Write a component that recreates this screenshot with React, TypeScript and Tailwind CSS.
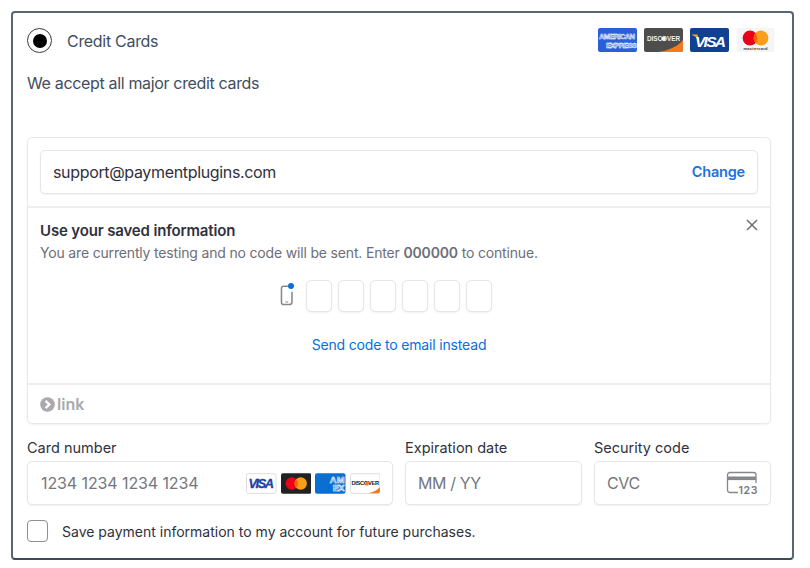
import React from "react";

const F = "Inter, 'Liberation Sans', sans-serif";

function Amex({ w = 39, h = 24 }: { w?: number; h?: number }) {
  return (
    <svg width={w} height={h} viewBox="0 0 39 24" className="block">
      <rect width="39" height="24" rx="2" fill="#2a5fd8" />
      <text x="1" y="11" fontSize="7.6" fontWeight="700" fill="#2a5fd8" stroke="#fff" strokeWidth="0.5" fontFamily="Liberation Sans, sans-serif" textLength="36">AMERICAN</text>
      <text x="8" y="20" fontSize="7.6" fontWeight="700" fill="#2a5fd8" stroke="#fff" strokeWidth="0.5" fontFamily="Liberation Sans, sans-serif" textLength="31">EXPRESS</text>
    </svg>
  );
}
function Discover() {
  return (
    <svg width="39" height="24" viewBox="0 0 39 24" className="block">
      <rect width="39" height="24" rx="2" fill="#4d4d4d" />
      <path d="M14 24 C26 22 34 18 39 12 V22 a2 2 0 0 1 -2 2 Z" fill="#f47a1c" />
      <text x="3" y="12.8" fontSize="6.4" fontWeight="700" fill="#eee" fontFamily="Liberation Sans, sans-serif" textLength="33">DISCOVER</text>
      <circle cx="19.6" cy="10.6" r="2.2" fill="#f5f5f5" />
    </svg>
  );
}
function Visa() {
  return (
    <svg width="39" height="24" viewBox="0 0 39 24" className="block">
      <rect width="39" height="24" rx="2" fill="#10408f" />
      <path d="M2 6.5 h5.5 l2 7 C7.5 10 5 8 2 7Z" fill="#f4a51c" />
      <text x="5" y="18.5" fontSize="15.5" fontWeight="700" fontStyle="italic" fill="#fff" fontFamily="Liberation Sans, sans-serif" textLength="31">VISA</text>
    </svg>
  );
}
function Master() {
  return (
    <svg width="39" height="24" viewBox="0 0 38 24" className="block">
      <rect width="38" height="24" rx="2" fill="#f5f5f5" />
      <circle cx="13.5" cy="10" r="7.4" fill="#eb001b" />
      <circle cx="24.5" cy="10" r="7.4" fill="#f79e1b" />
      <path d="M19 5 a7.4 7.4 0 0 1 0 10 a7.4 7.4 0 0 1 0 -10Z" fill="#ff5f00" />
      <text x="7" y="21.8" fontSize="4" fontWeight="700" fill="#333" fontFamily="Liberation Sans, sans-serif" textLength="24">mastercard</text>
    </svg>
  );
}
function SmVisa() {
  return (
    <svg width="30.5" height="21" viewBox="0 0 31 21" className="block">
      <rect x=".5" y=".5" width="30" height="20" rx="2" fill="#fff" stroke="#dcdcdc" />
      <text x="2.5" y="15.5" fontSize="13" fontWeight="700" fontStyle="italic" fill="#1a3fa8" stroke="#1a3fa8" strokeWidth="0.3" fontFamily="Liberation Sans, sans-serif" textLength="26">VISA</text>
    </svg>
  );
}
function SmMaster() {
  return (
    <svg width="30.5" height="21" viewBox="0 0 31 21" className="block">
      <rect width="31" height="21" rx="2" fill="#222" />
      <circle cx="11" cy="10.5" r="6.3" fill="#eb001b" />
      <circle cx="20" cy="10.5" r="6.3" fill="#f79e1b" />
      <path d="M15.5 6.1 a6.3 6.3 0 0 1 0 8.8 a6.3 6.3 0 0 1 0 -8.8Z" fill="#ff5f00" />
    </svg>
  );
}
function SmAmex() {
  return (
    <svg width="30.5" height="21" viewBox="0 0 31 21" className="block">
      <rect width="31" height="21" rx="2" fill="#0a6fd1" />
      <text x="15" y="10" fontSize="9.5" fontWeight="700" fill="#0a6fd1" stroke="#fff" strokeWidth="0.6" fontFamily="Liberation Sans, sans-serif" textLength="15">AM</text>
      <text x="18" y="18.5" fontSize="9.5" fontWeight="700" fill="#0a6fd1" stroke="#fff" strokeWidth="0.6" fontFamily="Liberation Sans, sans-serif" textLength="12">EX</text>
    </svg>
  );
}
function SmDiscover() {
  return (
    <svg width="30.5" height="21" viewBox="0 0 31 21" className="block">
      <rect x=".5" y=".5" width="30" height="20" rx="2" fill="#fff" stroke="#dcdcdc" />
      <path d="M19 20.5 C24 19 28 17 30.5 14 V18.5 a2 2 0 0 1 -2 2 Z" fill="#f47a1c" />
      <text x="1.5" y="12.5" fontSize="5.8" fontWeight="700" fill="#222" fontFamily="Liberation Sans, sans-serif" textLength="28">DISCOVER</text>
      <circle cx="17.3" cy="10.7" r="2" fill="#f47a1c" />
    </svg>
  );
}

function LinkLogo() {
  return (
    <div className="flex items-center gap-[1px] text-[#a8aaad]">
      <svg width="15" height="15" viewBox="0 0 15 15" className="block">
        <circle cx="7.5" cy="7.5" r="7.3" fill="#a8aaad" />
        <path d="M5.6 3.8 L9.3 7.5 L5.6 11.2" fill="none" stroke="#fff" strokeWidth="2.4" />
      </svg>
      <span className="text-[16px] font-semibold leading-none ml-[1px]">link</span>
    </div>
  );
}

function Phone() {
  return (
    <div className="relative w-[14px] h-[24px]">
      <svg width="14" height="21" viewBox="0 0 14 22" className="absolute left-0 top-[3px] block">
        <path d="M8 1.2 H3.5 a2.3 2.3 0 0 0 -2.3 2.3 v14.5 a2.5 2.5 0 0 0 2.5 2.5 h6 a2.5 2.5 0 0 0 2.5 -2.5 V7" fill="none" stroke="#85878c" strokeWidth="1.6" />
        <path d="M5.2 17.8 h3" stroke="#85878c" strokeWidth="1" />
      </svg>
      <span className="absolute left-[8px] top-[1px] w-[6px] h-[6px] rounded-full bg-[#0570de]" />
    </div>
  );
}

function CvcIcon() {
  return (
    <svg width="32" height="24" viewBox="0 0 32 24" className="block">
      <path d="M12 21.5 H4 a2.5 2.5 0 0 1 -2.5 -2.5 V4 a2.5 2.5 0 0 1 2.5 -2.5 H27.5 a2.5 2.5 0 0 1 2.5 2.5 V12" fill="none" stroke="#85878c" strokeWidth="1.3" />
      <rect x="1.5" y="5.5" width="28.5" height="3.6" fill="#85878c" />
      <text x="12.5" y="22.5" fontSize="10.5" fontWeight="600" fill="#75787e" fontFamily="Inter, sans-serif" textLength="19">123</text>
    </svg>
  );
}

const inputCls = "h-[44px] bg-white rounded-[5px] border border-[#e6e6e6] shadow-[0_1px_2px_rgba(0,0,0,0.06)] flex items-center";

export default function App() {
  return (
    <div className="w-[810px] h-[568px] bg-white overflow-hidden pt-[11px] pl-[11px]" style={{ fontFamily: F }}>
      <div className="w-[783px] h-[549px] rounded-[4px] border-2 border-[#5a6574] border-b-[#3f4a58] px-[14px]">
        <div className="flex items-center justify-between h-[53px] pr-[3px]">
          <div className="flex items-center mt-[2px]">
            <span className="w-[25px] h-[25px] rounded-full border border-[#3b3b3b] flex items-center justify-center">
              <span className="w-[14px] h-[14px] rounded-full bg-black" />
            </span>
            <span className="ml-[15px] text-[16px] tracking-[-0.3px] text-[#3f4d5f]">Credit Cards</span>
          </div>
          <div className="flex items-center gap-[7px]">
            <Amex />
            <Discover />
            <Visa />
            <Master />
          </div>
        </div>
        <div className="mt-[5px] text-[16px] tracking-[-0.34px] leading-[24px] text-[#3f4d5f]">We accept all major credit cards</div>

        <div className="mt-[42px] w-[744px] h-[287px] rounded-[5px] border border-[#e8e8e8] shadow-[0_1px_2px_rgba(0,0,0,0.05)] flex flex-col">
          <div className="h-[70px] px-[12px] pt-[12px] border-b-2 border-[#eeeeee] shrink-0">
            <div className={inputCls + " justify-between px-[12px]"}>
              <span className="text-[16px] tracking-[-0.34px] text-[#30313d]">support@paymentplugins.com</span>
              <span className="text-[14.5px] tracking-[-0.2px] font-semibold text-[#1a73e0]">Change</span>
            </div>
          </div>
          <div className="relative flex-1 px-[12px] pt-[14px]">
            <svg width="12" height="12" viewBox="0 0 12 12" className="absolute right-[12px] top-[11px] block">
              <path d="M1 1 L11 11 M11 1 L1 11" stroke="#6d6e78" strokeWidth="1.5" />
            </svg>
            <div className="text-[15px] tracking-[-0.15px] leading-[18px] font-semibold text-[#30313d]">Use your saved information</div>
            <div className="mt-[4px] text-[14px] tracking-[-0.17px] leading-[18px] text-[#6d6e78]">
              You are currently testing and no code will be sent. Enter <b className="font-semibold">000000</b> to continue.
            </div>
            <div className="mt-[18px] flex justify-center">
              <div className="relative flex gap-[6px]">
                <div className="absolute left-[-26px] top-[2px]"><Phone /></div>
                {[0, 1, 2, 3, 4, 5].map((i) => (
                  <span key={i} className="w-[26px] h-[32px] bg-white rounded-[5px] border border-[#e6e6e6] shadow-[0_1px_2px_rgba(0,0,0,0.05)]" />
                ))}
              </div>
            </div>
            <div className="mt-[24px] text-center text-[14px] tracking-[-0.17px] leading-[18px] text-[#0570de]">Send code to email instead</div>
          </div>
          <div className="h-[40px] border-t-2 border-[#eeeeee] px-[12px] flex items-center shrink-0">
            <LinkLogo />
          </div>
        </div>

        <div className="mt-[14px] grid grid-cols-[366px_177px_177px] gap-x-[12px]">
          <div>
            <div className="text-[14.5px] leading-[20px] text-[#30313d]">Card number</div>
            <div className={inputCls + " mt-[3px] pl-[13px] pr-[12px] justify-between"}>
              <span className="text-[16px] tracking-[-0.1px] text-[#757680]">1234 1234 1234 1234</span>
              <div className="flex items-center gap-[4px]">
                <SmVisa />
                <SmMaster />
                <SmAmex />
                <SmDiscover />
              </div>
            </div>
          </div>
          <div>
            <div className="text-[14.5px] leading-[20px] text-[#30313d]">Expiration date</div>
            <div className={inputCls + " mt-[3px] px-[12px]"}>
              <span className="text-[16px] tracking-[-0.4px] text-[#757680]">MM / YY</span>
            </div>
          </div>
          <div>
            <div className="text-[14.5px] leading-[20px] text-[#30313d]">Security code</div>
            <div className={inputCls + " mt-[3px] pl-[12px] pr-[12px] justify-between"}>
              <span className="text-[16px] tracking-[-0.4px] text-[#757680]">CVC</span>
              <CvcIcon />
            </div>
          </div>
        </div>

        <div className="mt-[15px] flex items-center">
          <span className="w-[21px] h-[22px] rounded-[4px] border border-[#8f8f8f] bg-white" />
          <span className="ml-[14px] text-[14px] text-[#30313d]">Save payment information to my account for future purchases.</span>
        </div>
      </div>
    </div>
  );
}
